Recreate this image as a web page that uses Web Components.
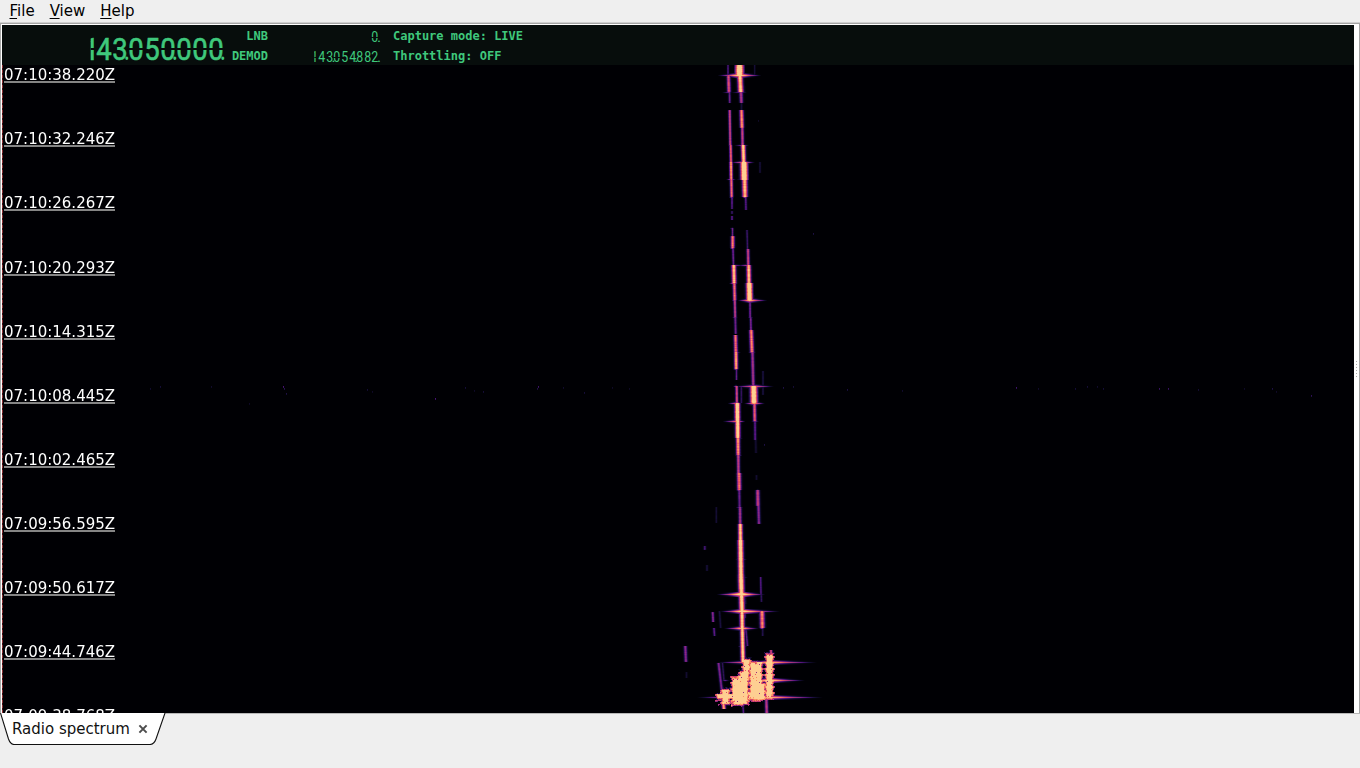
<!DOCTYPE html>
<html lang="en">
<head>
<meta charset="utf-8">
<title>Radio spectrum</title>
<style>
    html, body { margin: 0; height: 100%; overflow: hidden; background: #efefef; }
    body { font-family: "DejaVu Sans", sans-serif; }
</style>
</head>
<body>
<app-window>
    <menu-bar slot="menu">
        <menu-entry key="F">ile</menu-entry>
        <menu-entry key="V">iew</menu-entry>
        <menu-entry key="H">elp</menu-entry>
    </menu-bar>
    <receiver-bar slot="header">
        <lcd-display slot="main" value="143.050.000." size="big"></lcd-display>
        <lcd-display slot="lnb" value="0."></lcd-display>
        <lcd-display slot="demod" value="143.054.882."></lcd-display>
        <span slot="capture">Capture mode: LIVE</span>
        <span slot="throttle">Throttling: OFF</span>
    </receiver-bar>
    <water-fall slot="plot">
        <time-mark>07:10:38.220Z</time-mark>
        <time-mark>07:10:32.246Z</time-mark>
        <time-mark>07:10:26.267Z</time-mark>
        <time-mark>07:10:20.293Z</time-mark>
        <time-mark>07:10:14.315Z</time-mark>
        <time-mark>07:10:08.445Z</time-mark>
        <time-mark>07:10:02.465Z</time-mark>
        <time-mark>07:09:56.595Z</time-mark>
        <time-mark>07:09:50.617Z</time-mark>
        <time-mark>07:09:44.746Z</time-mark>
        <time-mark>07:09:38.768Z</time-mark>
    </water-fall>
    <page-tab slot="tabs">Radio spectrum</page-tab>
</app-window>

<script>
function addShadow(element, html) {
    const template = document.createElement('template');
    template.innerHTML = html;
    element.attachShadow({ mode: 'open' });
    element.shadowRoot.appendChild(template.content.cloneNode(true));
}

class AppWindow extends HTMLElement {
    constructor() {
        super();
        addShadow(this, `
            <style>
                :host { display: flex; flex-direction: column; width: 1360px; height: 768px; background: #efefef; }
                .frame {
                    box-sizing: border-box; height: 692px; display: flex;
                    border-top: 1px solid #d0d0d0; border-bottom: 1px solid #b8b8b8;
                }
                .inner {
                    flex: 1; display: flex; background: #fff;
                    border-top: 1px solid #a4a4a4; border-left: 1px solid #a8a8a8; border-right: 1px solid #a4a4a4;
                }
                .content { width: 1352px; margin: 1px 0 0 1px; display: flex; flex-direction: column; }
                .grip { flex: 1; display: flex; flex-direction: column; align-items: center; justify-content: center; gap: 2px; }
                .grip i { width: 1px; height: 1px; background: #aaa; }
            </style>
            <slot name="menu"></slot>
            <div class="frame">
                <div class="inner">
                    <div class="content">
                        <slot name="header"></slot>
                        <slot name="plot"></slot>
                    </div>
                    <div class="grip"><i></i><i></i><i></i><i></i><i></i><i></i></div>
                </div>
            </div>
            <slot name="tabs"></slot>
        `);
    }
}

class MenuBar extends HTMLElement {
    constructor() {
        super();
        addShadow(this, `
            <style>
                :host { display: flex; gap: 15px; height: 22px; padding-left: 9.5px; box-sizing: border-box; font-size: 15px; line-height: 22px; color: #000; }
            </style>
            <slot></slot>
        `);
    }
}

class MenuEntry extends HTMLElement {
    constructor() {
        super();
        addShadow(this, `
            <style>
                :host { display: block; }
                span { text-decoration: underline; text-decoration-thickness: 1px; text-underline-offset: 2px; }
            </style>
            <span></span><slot></slot>
        `);
        // keep the mnemonic and the rest of the word together
        const span = this.shadowRoot.querySelector('span');
        span.textContent = this.getAttribute('key');
    }
}

class PadLock extends HTMLElement {
    constructor() {
        super();
        const open = this.hasAttribute('open');
        addShadow(this, open ? `
            <style>:host { display: block; width: 12px; height: 14px; } svg { display: block; }</style>
            <svg width="12" height="14" viewBox="0 0 12 14">
                <path d="M2.5 3.5V2.5Q3 1 5.5 1Q9 1 9 4V6" fill="none" stroke="#1d663e" stroke-width="1.5"/>
                <rect x="0" y="5" width="11" height="8" fill="#217346"/>
            </svg>` : `
            <style>:host { display: block; width: 7px; height: 8px; } svg { display: block; }</style>
            <svg width="7" height="8" viewBox="0 0 7 8">
                <path d="M1.5 3V2Q1.5 .8 3 .8Q4.5 .8 4.5 2V3" fill="none" stroke="#184a30" stroke-width="1"/>
                <rect x="0" y="3" width="6" height="4" fill="#1e6640"/>
            </svg>`);
    }
}

class LcdDisplay extends HTMLElement {
    constructor() {
        super();
        addShadow(this, `
            <style>
                :host {
                    --pitch: 7.6px; --height: 13px; --squeeze: .8; --cut: 1px; --shift: 0px;
                    display: flex; height: var(--height); color: #3fc87c;
                    font: 15.5px/13px Roboto, "Liberation Sans", sans-serif;
                }
                :host([size=big]) {
                    --pitch: 16px; --height: 26px; --squeeze: .86; --cut: 1.5px; --shift: 3px;
                    font-size: 32px; line-height: 26px;
                    -webkit-text-stroke: .6px #3fc87c;
                }
                .digit { width: var(--pitch); display: flex; justify-content: center; transform: scaleX(var(--squeeze)); position: relative; }
                .digit::after { content: ""; position: absolute; left: -2px; right: -2px; top: calc(50% - var(--cut) / 2); height: var(--cut); background: #070d0c; }
                .solid::after { display: none; }
                /* a lit one is only its right hand bar */
                .one { transform: translateX(var(--shift)); clip-path: inset(0 0 0 48%); }
                .dot { width: 0; display: flex; justify-content: center; }
                :host([size=big]) .dot { transform: translateX(-1px) scaleX(.75); -webkit-text-stroke: 0; }
            </style>
        `);
        for (const char of this.getAttribute('value')) {
            const span = document.createElement('span');
            span.className = char === '.' ? 'dot' : 'digit';
            if ('234589'.includes(char)) span.className += ' solid';
            if (char === '1') span.className += ' one';
            span.textContent = char;
            this.shadowRoot.appendChild(span);
        }
    }
}

class ReceiverBar extends HTMLElement {
    constructor() {
        super();
        addShadow(this, `
            <style>
                :host {
                    display: grid; grid-template-columns: 20px 202px 44px 12px 99px 14px auto; height: 40px;
                    background: #070d0c; color: #3fc87c;
                    font: bold 12px/20px "DejaVu Sans Mono", monospace; white-space: pre;
                }
                .lock { padding: 4px 0 0 2px; }
                .main { display: flex; justify-content: flex-end; align-items: flex-start; padding-top: 11px; }
                .rows { display: grid; grid-template-rows: 20px 20px; padding-top: 1px; }
                .names { text-align: right; }
                .locks { padding: 1px 0 0 8px; }
                .values { justify-items: end; padding-top: 6px; }
            </style>
            <div class="lock"><pad-lock open></pad-lock></div>
            <div class="main"><slot name="main"></slot></div>
            <div class="rows names"><span>LNB</span><span>DEMOD</span></div>
            <div class="rows locks"><pad-lock></pad-lock><pad-lock></pad-lock></div>
            <div class="rows values"><slot name="lnb"></slot><slot name="demod"></slot></div>
            <div></div>
            <div class="rows"><slot name="capture"></slot><slot name="throttle"></slot></div>
        `);
    }
}

class TimeMark extends HTMLElement {
    constructor() {
        super();
        addShadow(this, `
            <style>
                :host { display: block; height: 64.08px; }
                span { display: inline-block; height: 16px; line-height: 20px; border-bottom: 2px solid #858585; }
            </style>
            <span><slot></slot></span>
        `);
    }
}

class PageTab extends HTMLElement {
    constructor() {
        super();
        addShadow(this, `
            <style>
                :host { display: block; width: 166px; height: 32px; margin-top: -1px; position: relative; color: #111; font-size: 15px; }
                svg { display: block; }
                .label { position: absolute; inset: 0; display: flex; align-items: center; gap: 8px; padding-left: 12px; height: 32px; }
            </style>
            <svg width="166" height="32" viewBox="0 0 166 32">
                <path d="M0 0L8.5 26Q10.5 31.5 14 31.5H150Q154 31.5 156 26L165 0Z" fill="#fff"/>
                <path d="M.5 0L8.5 26Q10.5 31.5 14 31.5H150Q154 31.5 156 26L165 0" fill="none" stroke="#111" stroke-width="1.1"/>
            </svg>
            <div class="label"><slot></slot>
                <svg width="10" height="10" viewBox="0 0 10 10"><path d="M1.4 1.4L8.6 8.6M8.6 1.4L1.4 8.6" stroke="#4c4c4c" stroke-width="2"/></svg>
            </div>
        `);
    }
}

// window coordinates of the plot's corner
const LEFT = 2;
const TOP = 65;
const WIDTH = 1352;
const HEIGHT = 648;

// y0, y1, x0, x1, level, half width
const traces = [
    [65,75,728,728,.25,.7],[75,92,728.5,729,.58,1.3],[92,103,729.5,729.7,.3,.9],[110,145,729.7,730.3,.52,1],
    [145,162,730.7,731,.65,1],[162,179,731,731.2,.8,1.1],[179,197,731.3,731.7,.65,1.1],[197,209,732,732,.27,.8],[211,214,732,732,.2,.8],[216,220,732,732,.28,.8],
    [228,238,732.5,732.5,.3,.8],[236,248,732.7,732.7,.7,1.3],[248,265,733,733.5,.3,.9],[265,283,733.8,734.2,.93,1.5],[283,300,734.3,734.8,.68,1.2],
    [300,317,734.8,735.2,.5,1],[317,334,735.3,735.7,.3,1],[335,352,735.5,735.9,.66,1.3],[352,369,736,736.2,.82,1.3],[369,380,736.5,736.5,.28,.8],
    [386,403,736.7,736.9,.55,1],[403,421,737.3,737.5,1.2,1.7],[421,438,737.7,737.8,1.1,1.6],[438,455,738,738.2,.76,1.4],[455,473,738.3,738.5,.5,1.2],
    [473,490,739,739.3,.68,1.5],[490,507,739.3,739.6,.3,1.1],[507,524,740,740.2,.42,1.2],[524,540,740.3,740.5,.95,1.5],[540,575,740.5,741,1.1,1.8],
    [575,594,741,741.5,1.1,1.9],[594,611,741.5,742,1.05,1.8],[611,628,742,742.2,1,1.6],[628,662,742.3,743,1,1.5],
    [65,76,739.5,739.5,1.3,2.6],[76,92,740,740.8,.97,1.8],[92,103,741,741.4,.45,1.3],[103,110,741.5,741.5,.12,.8],[110,128,741.5,742,.75,1.4],[128,145,742.3,742.6,.52,1.1],
    [145,162,743.2,743.7,1,1.5],[162,180,744,744.3,1.3,2.3],[180,197,744.7,745,.9,1.8],[197,210,745.7,746,.25,.9],[230,249,747,747.5,.2,.8],
    [249,265,748,748.3,.53,1.1],[265,283,748.7,749,.93,1.5],[283,300,749.3,749.6,1.25,2],[300,318,750,750.2,.32,.9],[318,332,750.7,751,.34,.9],
    [330,352,751.2,752,.72,1.4],[352,386,752.5,753.3,.42,1.2],[386,403,753.7,754,1.2,2.3],[403,421,754.5,754.8,.62,1.2],[421,440,755,755.2,.27,1],
    [440,453,755.7,756,.1,.9],[475,480,756.5,756.5,.1,.8],[490,506,757.7,758,.5,1.4],[506,524,758.5,759,.35,1.2],[577,594,760.7,761,.25,.8],
    [594,602,761.2,761.5,.18,.8],[611,628,762,762.4,.72,1.7],[628,636,762.7,762.7,.15,.8],[507,523,716.3,716.3,.11,.7],[546,550,704.8,704.8,.23,.9],
    [565,571,707,707,.12,.8],[646,662,685.3,686,.36,1.2],[672,678,686.5,686.5,.1,.8],[612,622,712.7,713.2,.36,1],[628,636,714,714.6,.27,.9],
    [611,628,719.5,720.7,.13,.8],[663,690,718.6,721.8,.34,1.1],[663,680,722.5,724,.17,.8],[162,173,760,760,.12,.7],[371,395,763,763,.14,.7],
    [386,403,741.3,741.3,.18,.8],[611,618,745,745,.25,.8],[630,646,746,747.5,.25,.9],[595,604,745,745.5,.15,.9],[65,75,754.7,754.7,.12,.6],[698,713,766.3,766.8,.48,1.2],[706,713,743,743.5,.25,.8]
];

// y, x, reach to the left, reach to the right, level
const flares = [
    [75,739.5,22,22,1.1],[92,729,7,3,.35],[92,741,10,6,.35],[145,743,9,6,.45],[162,744,14,11,.75],[162,731,3,3,.5],[179,731,5,5,.55],
    [179,743,7,3,.3],[197,731.5,3,3,.35],[197,745,3,3,.45],[110,741.5,3,2,.35],[145,730.5,3,3,.35],[228,732.5,3,2,.3],[248,732.5,3,3,.45],
    [265,733.5,3,13,.4],[265,748.5,12,4,.55],[283,734,5,4,.65],[283,749,5,5,.5],[300,734.5,3,3,.5],[300,749.5,12,18,.95],[317,735,3,3,.4],
    [317,750.5,3,3,.3],[352,736,3,5,.4],[352,752,4,4,.5],[369,736,3,3,.4],[386,754,20,20,.75],[386,736,3,3,.5],[403,754,10,11,.85],
    [403,737.5,10,4,.8],[421,737.5,15,8,.8],[421,755,4,4,.35],[438,738,3,5,.4],[455,738.5,4,4,.4],[473,739,4,3,.4],[490,739,3,3,.4],
    [490,757.7,3,3,.35],[507,739.5,4,4,.35],[524,740,4,3,.4],[559,741,6,6,.5],[577,741,5,7,.4],[594,741.5,25,24,1.2],[611,742,22,38,1.1],
    [628,742,18,17,.95],[646,742.5,5,5,.5],[611,762,4,15,.4],[628,762,3,3,.4],[662,748,31,50,.8],[662,769,25,48,.95],[680,769,24,36,1.1],
    [697,732,35,35,.7],[697,769,25,54,.95],[680,725,4,5,.3]
];

// x0, x1, y0, y1 of the solid parts of the burst
const burst = [
    [744,748,660,669],[744,747,665,679],[751,754,663,696],[754,757,665,698],[758,760,663,698],[759,763,684,698],[741,745,672,702],
    [735,740,681,702],[733,746,679,699],[739,743,676,680],[767,771,655,694],[767,770,676,696],[723,727,690,702],[718,734,695,697],
    [735,741,698,703],[749,762,693,697]
];

const palette = [[0,0,4],[22,14,58],[81,18,124],[140,41,129],[183,55,121],[229,80,100],[252,137,97],[254,175,119],[254,207,146]];

function shade(level) {
    const t = Math.max(0, Math.min(1, level)) * (palette.length - 1);
    const i = Math.min(palette.length - 2, Math.floor(t));
    return palette[i].map((c, n) => c + (palette[i + 1][n] - c) * (t - i));
}

class WaterFall extends HTMLElement {
    constructor() {
        super();
        addShadow(this, `
            <style>
                :host { display: block; position: relative; box-sizing: border-box; height: 648px; overflow: hidden; padding-left: 2px; background: #000004; color: #fff; font-size: 15px; line-height: 16px; }
                canvas { position: absolute; left: 0; top: 0; }
                .edge { position: absolute; left: 0; top: 0; width: 1px; height: 100%; background: repeating-linear-gradient(#8d3034 0 3px, #351014 3px 5px); }
                .marks { position: relative; padding-top: .3px; }
            </style>
            <canvas width="${WIDTH}" height="${HEIGHT}"></canvas>
            <div class="edge"></div>
            <div class="marks"><slot></slot></div>
        `);
    }

    connectedCallback() {
        this.levels = new Float32Array(WIDTH * HEIGHT);
        this.seed = 7;
        for (const f of flares) this.flare(...f);
        for (const t of traces) this.trace(...t);
        for (const b of burst) this.blob(...b);
        this.fringe();
        this.specks();
        this.paint();
    }

    random() {
        this.seed = (this.seed * 1103515245 + 12345) % 2147483648;
        return this.seed / 2147483648;
    }

    raise(x, y, level) {
        x -= LEFT;
        y -= TOP;
        if (x < 0 || y < 0 || x >= WIDTH || y >= HEIGHT) return;
        const i = y * WIDTH + x;
        this.levels[i] = Math.max(this.levels[i], level);
    }

    trace(y0, y1, x0, x1, level, half) {
        for (let y = y0; y < y1; y++) {
            const cx = x0 - .5 + (x1 - x0) * (y - y0) / (y1 - y0);
            const wobble = .95 + this.random() * .15;
            for (let x = Math.floor(cx - 5); x <= cx + 5; x++) {
                const d = Math.abs(x - cx) / half;
                this.raise(x, y, level * wobble * Math.exp(-d * d * .55));
            }
        }
    }

    flare(y, cx, left, right, level) {
        cx -= .5;
        for (let x = Math.floor(cx - left); x <= cx + right; x++) {
            const d = x < cx ? (cx - x) / left : (x - cx) / right;
            const v = level * Math.pow(1 - Math.min(1, d), 1.15);
            this.raise(x, y, v);
            this.raise(x, y - 1, v * v * .75);
            this.raise(x, y + 1, v * v * .6);
            this.raise(x, y - 2, v * v * v * .35);
            this.raise(x, y + 2, v * v * v * .35);
        }
    }

    blob(x0, x1, y0, y1) {
        for (let y = y0 - 3; y <= y1 + 3; y++) {
            // each pair of rows reaches out differently
            const ragged = (Math.floor(y / 2) * 7 + x0) % 3 * .14;
            for (let x = x0 - 3; x <= x1 + 3; x++) {
                const out = Math.max(x0 - x, x - x1, y0 - y, y - y1, 0);
                let v = 1.2 - out * (.2 + ragged) - this.random() * (out ? .2 : .1);
                if (out === 0 && this.random() < .03) v = .6;
                this.raise(x, y, v);
            }
        }
        // dark pinholes
        for (let n = 0; n < (x1 - x0) * (y1 - y0) / 60; n++) {
            const x = Math.floor(x0 + this.random() * (x1 - x0)) - LEFT;
            const y = Math.floor(y0 + this.random() * (y1 - y0)) - TOP;
            this.levels[y * WIDTH + x] = .4;
        }
    }

    // ragged lower edge of the burst
    fringe() {
        for (let n = 0; n < 80; n++) {
            const x = Math.round(713 + this.random() * 37);
            const y = Math.round(690 + this.random() * 15);
            const v = .3 + this.random() * .5;
            this.raise(x, y, v);
            this.raise(x + 1, y, v * .8);
            this.raise(x, y + 1, v * .7);
        }
        this.trace(699, 709, 723, 724, .8, 1.3);
        this.trace(650, 658, 771, 771.3, .55, 1);
        this.trace(653, 662, 767, 767.5, .6, 1.2);
    }

    specks() {
        const points = [
            [150,388,.08],[160,386,.1],[211,386,.08],[283,386,.2],[284,388,.14],[286,393,.12],[249,403,.07],[367,389,.1],[372,391,.07],
            [435,398,.2],[465,387,.1],[474,390,.07],[483,391,.1],[538,386,.18],[537,388,.12],[563,387,.08],[584,392,.1],[612,387,.07],[629,388,.07],
            [783,387,.12],[793,386,.1],[847,389,.12],[902,390,.08],[1016,387,.18],[1038,388,.08],[1075,388,.1],[1087,386,.1],[1097,386,.08],
            [1103,388,.1],[1159,388,.17],[1168,388,.17],[1198,389,.1],[1244,388,.07],[1272,388,.12],[1276,391,.07],[1311,395,.15],[813,233,.12],[764,444,.12],[758,120,.07]
        ];
        for (const [x, y, v] of points) {
            this.raise(x, y, v * 1.2);
            this.raise(x, y + 1, v);
        }
    }

    paint() {
        const ctx = this.shadowRoot.querySelector('canvas').getContext('2d');
        const image = ctx.createImageData(WIDTH, HEIGHT);
        for (let i = 0; i < this.levels.length; i++) {
            const [r, g, b] = shade(this.levels[i]);
            image.data.set([r, g, b, 255], i * 4);
        }
        ctx.putImageData(image, 0, 0);
    }
}

customElements.define('pad-lock', PadLock);
customElements.define('lcd-display', LcdDisplay);
customElements.define('menu-entry', MenuEntry);
customElements.define('menu-bar', MenuBar);
customElements.define('receiver-bar', ReceiverBar);
customElements.define('time-mark', TimeMark);
customElements.define('water-fall', WaterFall);
customElements.define('page-tab', PageTab);
customElements.define('app-window', AppWindow);
</script>
</body>
</html>
